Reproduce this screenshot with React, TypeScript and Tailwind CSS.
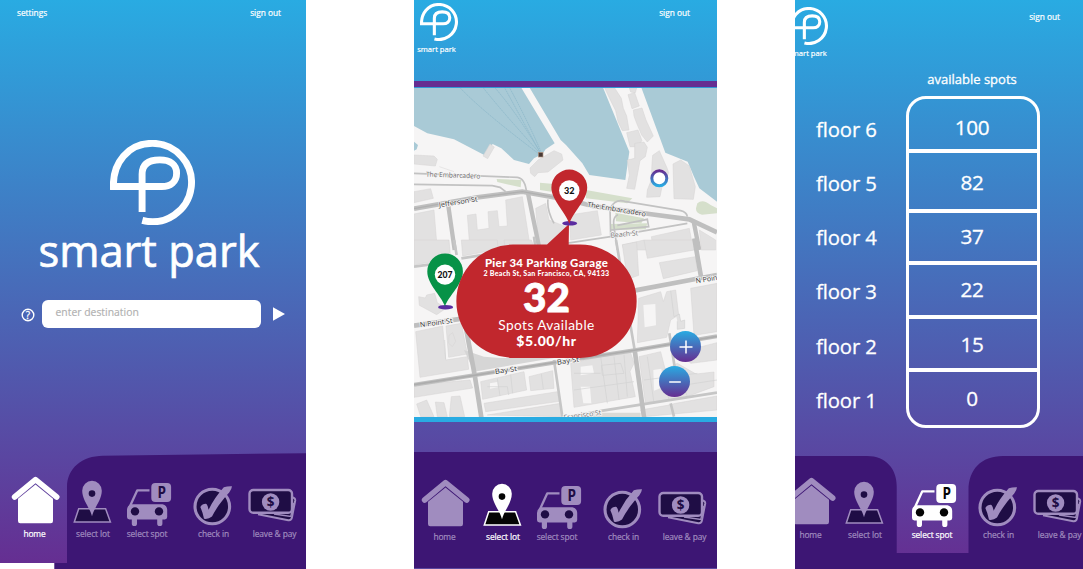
import React from "react";

type NavKey = "home" | "lot" | "spot" | "check" | "pay";

const MUTED = "#a08cbf";
const INK = "#1f0d45";

function LogoMark({ className }: { className: string }) {
  return (
    <svg className={className} viewBox="110.2 139.8 85 85" fill="none" stroke="#fff" strokeWidth="6.9">
      <path d="M142.3 211.7V174C142.3 164 149 159.7 160 159.7C170.5 159.7 176.8 164.500 176.800 173C176.800 181.500 170.500 186.300 162 186.300H113.600C112.900 163 128 143.100 152.700 143.100A39.200 39.200 0 1 1 142.500 220.200" />
    </svg>
  );
}

function HomeIcon({ color }: { color: string }) {
  return (
    <svg className="block h-[54px] w-[70px]" viewBox="0 474 70 54">
      <path d="M14.600 497L35.500 479.700L56.700 497" fill="none" stroke={color} strokeWidth="5.600" strokeLinecap="round" strokeLinejoin="round" />
      <path d="M35.500 484.500L53 498.800V521q0 2.200-2.200 2.200H20.200q-2.200 0-2.200-2.200V498.800Z" fill={color} />
    </svg>
  );
}

function LotIcon({ color, ink }: { color: string; ink: string }) {
  return (
    <svg className="block h-[54px] w-[44px]" viewBox="70 474 44 54">
      <path d="M78.700 508.800H105.600L110.400 522.100H74.300Z" fill={ink} stroke={color} strokeWidth="1.500" />
      <path d="M92 516.200C90 508 82.200 500 82.200 490.800A9.800 10 0 0 1 101.800 490.800C101.800 500 94 508 92 516.200Z" fill={color} />
      <circle cx="92" cy="493.600" r="3.300" fill={ink} />
    </svg>
  );
}

function SpotIcon({ color, ink }: { color: string; ink: string }) {
  return (
    <svg className="block h-[54px] w-[68px]" viewBox="114 474 68 54">
      <path d="M149.500 490.300H137.300L129.600 507" fill="none" stroke={color} strokeWidth="2.300" strokeLinejoin="round" />
      <path d="M131.500 504.300H162.500Q167.200 505.500 167.200 510V517q0 2.400-2.400 2.400H162.400V523.400a2.600 2.600 0 0 1-5.200 0V519.400H137V523.400a2.600 2.600 0 0 1-5.200 0V519.400H129.400q-2.400 0-2.400-2.400V510Q127 505.500 131.500 504.300Z" fill={color} />
      <circle cx="135" cy="511.400" r="4.200" fill={ink} />
      <circle cx="159" cy="511.400" r="4.200" fill={ink} />
      <rect x="151.300" y="483" width="19.800" height="19" rx="4" fill={color} />
      <text x="157.400" y="498.400" fontFamily="Open Sans, sans-serif" fontWeight="700" fontSize="15.800" textLength="8.500" lengthAdjust="spacingAndGlyphs" fill={ink}>P</text>
    </svg>
  );
}

function CheckIcon({ color, ink }: { color: string; ink: string }) {
  return (
    <svg className="block h-[54px] w-[62px]" viewBox="182 474 62 54">
      <circle cx="212.300" cy="506.500" r="17.300" fill={ink} stroke={color} strokeWidth="3.100" />
      <path d="M200.300 507Q202.500 503.500 206.500 503.900Q208 505.500 208.600 509.800Q214.500 497.500 223.800 487.300Q227.500 486 232 486.200Q231.600 489.500 229.200 492.500C222 500.500 216 508.500 212 516.500Q208.500 519.500 204 518.800Q202.500 511.500 200.300 507Z" fill={color} />
    </svg>
  );
}

function PayIcon({ color, ink }: { color: string; ink: string }) {
  return (
    <svg className="block h-[54px] w-[58px]" viewBox="244 474 58 54">
      <path d="M292 497.300L293.500 497.700Q295.500 498.400 295.200 500.500L291.900 517.600Q291.300 520.600 288.300 520.200L258 514.300" fill={ink} stroke={color} strokeWidth="2" />
      <path d="M293.600 503L290.800 516.500L274 514" fill="none" stroke={color} strokeWidth="1.400" />
      <rect x="249.500" y="490" width="42.500" height="22.700" rx="3.800" fill={ink} stroke={color} strokeWidth="2.400" />
      <circle cx="270.600" cy="502" r="8.700" fill={color} />
      <text x="270.600" y="507" textAnchor="middle" fontFamily="Open Sans, sans-serif" fontWeight="700" fontSize="13.500" fill={ink}>$</text>
    </svg>
  );
}

const ICONS = { home: HomeIcon, lot: LotIcon, spot: SpotIcon, check: CheckIcon, pay: PayIcon };

const NAV: { key: NavKey; label: string; width: string; shift: string }[] = [
  { key: "home", label: "home", width: "w-[70px]", shift: "pr-[1px]" },
  { key: "lot", label: "select lot", width: "w-[44px]", shift: "pl-[2px]" },
  { key: "spot", label: "select spot", width: "w-[68px]", shift: "pr-[2px]" },
  { key: "check", label: "check in", width: "w-[62px]", shift: "pl-[1px]" },
  { key: "pay", label: "leave & pay", width: "w-[58px]", shift: "pl-[3px]" },
];

function NavItems({ active, className, offsets = {} }: { active: NavKey; className: string; offsets?: Partial<Record<NavKey, string>> }) {
  return (
    <div className={`relative flex ${className}`}>
      {NAV.map(({ key, label, width, shift }) => {
        const Icon = ICONS[key];
        const on = key === active;
        return (
          <div key={key} className={`flex shrink-0 flex-col ${width} ${offsets[key] ?? ""}`}>
            <Icon color={on ? "#fff" : MUTED} ink={on ? "#050505" : INK} />
            <span className={`flex justify-center text-[8.400px] leading-[12px] tracking-[-0.1px] whitespace-nowrap [-webkit-text-stroke:0.200px] ${shift} ${on ? "text-white" : "text-[#a08cbf]"}`}>{label}</span>
          </div>
        );
      })}
    </div>
  );
}

function HomeScreen() {
  return (
    <section className="flex h-[569px] w-[306px] shrink-0 flex-col overflow-hidden bg-linear-to-b/srgb from-[#29abe2] to-[#662d91]">
      <header className="flex h-[26px] items-center justify-between pr-[25px] pl-[17px] text-[8.3px] [-webkit-text-stroke:0.200px]">
        <span>settings</span>
        <span>sign out</span>
      </header>
      <div className="flex flex-col items-center pt-[114px]">
        <LogoMark className="mr-[1.400px] block h-[85px] w-[85px]" />
        <h1 className="mt-[4px] mr-[8px] text-[43.500px] leading-[44px] whitespace-nowrap [-webkit-text-stroke:0.700px]">smart park</h1>
      </div>
      <div className="mt-[26.500px] flex h-7 items-center pl-[21px]">
        <svg className="mt-[3px] h-[14px] w-[14px]" viewBox="0 0 14 14">
          <circle cx="7" cy="7" r="5.800" fill="none" stroke="#fff" strokeWidth="1.400" />
          <text x="7" y="10.500" textAnchor="middle" fontFamily="Open Sans, sans-serif" fontSize="10" stroke="#fff" strokeWidth="0.300" fill="#fff">?</text>
        </svg>
        <div className="ml-[7px] flex h-7 w-[219px] items-center rounded-[6px] bg-white pb-px pl-[13.500px] text-[10.400px] text-[#b0b0b0] [-webkit-text-stroke:0.150px]">enter destination</div>
        <svg className="ml-3 h-[14px] w-[12px]" viewBox="0 0 12 14"><path d="M0 0.200L12 7L0 13.800Z" fill="#fff" /></svg>
      </div>
      <nav className="relative mt-auto h-[118px] pt-[23px]">
        <svg className="absolute inset-0 h-[118px] w-[306px]" viewBox="0 451 306 118">
          <path d="M0 563H54.500V569H0Z" fill="#fff" />
          <path d="M306 453.200L103 455.700C82 456 67 468 67 487V563H54.500V569H306Z" fill="#3d1674" />
        </svg>
        <NavItems active="home" className="" />
      </nav>
    </section>
  );
}

function Streets() {
  return (
    <svg className="block h-[329px] w-[303px]" viewBox="0 0 909 987" fontFamily="Open Sans, sans-serif">
      <rect width="909" height="987" fill="#f6f5f5" />
      {/* northern waterfront */}
      <g transform="translate(0 -24)">
        <path d="M0 20H320L422 190L395 208L385 222L360 235L345 252L300 240L262 205L236 192L212 226L120 178L40 160L0 138ZM345 20H566L646 215L634 300L526 285L505 250L456 195L440 180ZM681 20H909V365L856 325L840 290L821 245L754 218ZM0 185L12 195L8 208L0 212Z" fill="#a9cad6" />
        <g fill="none" stroke="#8bb7c9" strokeWidth="2.500" strokeDasharray="5 2">
          <path d="M135 20Q200 90 375 222M205 20Q260 90 378 220M240 20Q310 100 380 220M270 20Q330 130 380 220M285 20Q345 130 382 218" />
        </g>
        <g fill="#e2e1e1" stroke="#d6d5d5" strokeWidth="1.500">
          <path d="M228 192L241 201L221 236L207 228Z" />
          <path d="M348 264L372 240L420 212L443 222L447 240L402 276L372 278L362 290L350 280Z" />
          <path d="M0 225L60 228L70 238L64 258L0 252ZM0 335L50 326L58 355L0 368ZM0 402L60 390L70 510H0ZM76 260L120 275" />
          <path d="M160 406L186 402L190 450L225 445L222 395L250 392L255 440L280 438L275 360L325 350L346 485L200 510H168Z" />
          <path d="M365 385L395 370L405 420L456 440V485L375 500Z" />
        </g>
        <g fill="#e2e1e1" stroke="#d4d3d3" strokeWidth="1.500">
          <path d="M572 24H602L622 55L628 85L638 108L645 150L625 152L612 125L605 92L590 62Z" />
          <path d="M646 24H668L664 38L650 36ZM642 44L662 38L676 78L654 86Z" />
          <path d="M658 90L684 84L696 120L718 168L700 186L683 165L668 130L660 108Z" />
          <path d="M638 158L672 150L684 182L668 200L648 200Z" />
          <path d="M662 190L690 186L700 202L694 230L678 242L662 328L638 325L646 286L640 240L662 235Z" />
          <path d="M716 226L736 212L760 266L764 278L744 320L738 350L698 352L700 330L712 300L714 250Z" />
          <path d="M777 252L800 240L826 258L844 320L838 358L780 356Z" />
        </g>
        <g fill="#d5dfcb">
          <path d="M248 297L322 300L320 322L250 306ZM378 308L420 312L412 335L378 330ZM516 330L655 355L640 370L516 355ZM604 398L690 415L682 430L606 424ZM590 432L700 430L695 448L590 450ZM850 370Q866 355 890 375L909 385V400L864 404Q845 400 846 385Z" />
        </g>
        <g fill="none" stroke="#c2c2c2" strokeWidth="5">
          <path d="M0 280L310 292Q334 295 338 340M0 313L235 317L258 322L275 335M590 470L588 385Q605 355 632 364L800 392Q818 396 820 410M612 404Q595 410 600 440L610 510M590 450L704 440L700 418L610 436M456 490L590 470L820 430M402 358Q398 390 420 430" />
        </g>
        <g fill="none" stroke="#bfbfbf" strokeWidth="14">
          <path d="M0 386L190 352L325 335L456 358L536 378L706 402L826 418L909 457" />
          <path d="M103 378L122 510M342 340L375 500M839 425L856 510" strokeWidth="13" />
        </g>
        <path d="M0 386L190 352L325 335L456 358" fill="none" stroke="#b0b0b0" strokeWidth="4" />
        <g fill="#e2e1e1" stroke="#d6d5d5" strokeWidth="1.500">
          <path d="M466 405L550 392L562 465L470 480ZM625 495L690 480L705 510H630ZM712 470L826 445L838 510H718ZM856 450L905 480V510H862Z" />
        </g>
        <g fontSize="21" fill="#777" stroke="#f6f5f5" strokeWidth="4" paintOrder="stroke">
          <text x="36" y="290" transform="rotate(2 36 290)" textLength="163" lengthAdjust="spacingAndGlyphs" fill="#666">The Embarcadero</text>
          <text x="76" y="382" transform="rotate(-9 76 382)" textLength="117" lengthAdjust="spacingAndGlyphs" fill="#333">Jefferson St</text>
          <text x="519" y="380" transform="rotate(9.500 519 380)" textLength="178" lengthAdjust="spacingAndGlyphs" fill="#333">The Embarcadero</text>
          <text x="590" y="473" transform="rotate(-5 590 473)" textLength="83" lengthAdjust="spacingAndGlyphs">Beach St</text>
        </g>
        <rect x="373" y="217" width="14" height="14" fill="#493a35" stroke="#b59886" strokeWidth="2" />
      </g>
      {/* southern blocks */}
      <g transform="translate(0 456)">
        <g fill="#e2e1e1" stroke="#d4d3d3" strokeWidth="1.500">
          <path d="M0 0H105L110 55L0 75ZM142 0H250L252 28L146 48ZM270 0H352L360 20L275 32Z" />
          <path d="M14 170L34 174L38 165L62 160L70 188L96 205L68 224L16 196Z" />
          <path d="M5 275L86 258L95 360L160 350L164 388L18 412ZM96 258L142 250L160 342L104 352ZM105 286L116 278L125 304L115 320L104 310Z" />
          <path d="M0 435L168 420L176 444L0 472ZM8 492L38 480L60 530H20ZM64 486L90 488L100 530H70ZM112 470L138 468L152 530H106Z" />
          <path d="M200 425L330 395L338 450L206 478ZM345 410L416 392L420 445L350 452ZM210 490L430 455L436 484L215 515ZM220 525L440 490L442 530Z" />
          <path d="M625 14L668 6L674 106L640 118ZM690 0H838L840 30L700 55ZM736 68L844 50L850 92L748 116Z" />
          <path d="M674 175L740 155L748 185L758 155L785 150L794 225L770 240L758 292L670 308ZM830 145L909 130V275L840 286Z" />
          <path d="M470 370L560 350L650 338L660 370L648 394L664 470L480 502ZM675 350L740 335L754 390L790 370L846 402L900 396V440L808 474L694 488Z" />
          <path d="M800 336L909 308V360L830 370ZM680 510L760 496L785 490L909 468V510L690 530Z" />
        </g>
        <path d="M150 330L210 350L260 354H420L180 395Z" fill="#d6d6d6" />
        <g fill="#f6f5f5">
          <path d="M688 195L724 192L726 256L692 262ZM500 380L535 376L540 400L500 406ZM500 440H528L532 490H508ZM718 390L742 386L750 440L720 452ZM228 430L250 426L252 442L228 446Z" />
        </g>
        <g fill="none" stroke="#d2d1d1" strokeWidth="2">
          <path d="M250 416L258 468M290 404L296 460M382 402L388 447M95 358L92 300M480 400H560M560 350L580 490M600 350L615 480M630 344L640 470M480 450L660 425M700 350L720 490M750 410L765 480M690 420L850 400M780 440L909 420M800 410L820 470" />
          <path d="M770 152L780 230L796 222L800 244L812 240V265L790 268V244" fill="#e2e1e1" />
          <path d="M562 376L620 370L630 400L565 406ZM220 440H280L284 465" />
        </g>
        <g fill="none" stroke="#c6c6c6" strokeWidth="8">
          <path d="M0 80L45 74M142 55L250 38M120 0L128 45M360 -10L364 20M420 360L445 530" />
          <path d="M456 532L566 512L909 458M606 0L662 330M766 280L785 400M770 490L780 530" />
        </g>
        <g fill="none" stroke="#bfbfbf" strokeWidth="14">
          <path d="M0 257L150 235M660 152L909 105M150 232L182 405L202 532M662 330L690 532M841 -5L861 110" />
          <path d="M0 434L180 406L456 362L666 330L909 289" strokeWidth="12" />
        </g>
        <path d="M0 434L180 406L456 362L666 330L909 289" fill="none" stroke="#adadad" strokeWidth="5" />
        <path d="M456 530L566 518H680V532H456Z" fill="#dadad6" />
        <g fontSize="21" fill="#333" stroke="#f6f5f5" strokeWidth="5" paintOrder="stroke">
          <text x="19" y="262" transform="rotate(-8 19 262)" textLength="98" lengthAdjust="spacingAndGlyphs">N Point St</text>
          <text x="846" y="130" transform="rotate(-9 846 130)" textLength="98" lengthAdjust="spacingAndGlyphs">N Point St</text>
          <text x="244" y="402" transform="rotate(-8 244 402)" textLength="66" lengthAdjust="spacingAndGlyphs">Bay St</text>
          <text x="430" y="374" transform="rotate(-8 430 374)" textLength="66" lengthAdjust="spacingAndGlyphs">Bay St</text>
          <text x="450" y="540" transform="rotate(-8 450 540)" textLength="113" lengthAdjust="spacingAndGlyphs" fill="#777">Francisco St</text>
        </g>
      </g>
    </svg>
  );
}

function Pins() {
  return (
    <svg className="absolute inset-0 h-[329px] w-[303px]" viewBox="414 88 303 329" fontFamily="Lato, sans-serif">
      <defs>
        <linearGradient id="ring" x1="0" y1="0" x2="0" y2="1">
          <stop offset="0" stopColor="#662d91" />
          <stop offset="1" stopColor="#29abe2" />
        </linearGradient>
      </defs>
      <circle cx="659.300" cy="178.300" r="7.500" fill="#fff" stroke="url(#ring)" strokeWidth="3" />
      <ellipse cx="445.600" cy="307.200" rx="7.500" ry="2.300" fill="#5a2ca0" />
      <path d="M445 306.500C441 295 427.300 284.500 427.300 271.500A17.800 18 0 0 1 462.900 271.500C462.900 284.500 449 295 445 306.500Z" fill="#079247" />
      <circle cx="445" cy="274.600" r="10.200" fill="#fff" />
      <text x="445" y="277.600" textAnchor="middle" fontWeight="900" fontSize="8.400" textLength="15" lengthAdjust="spacingAndGlyphs" fill="#111">207</text>
      <path d="M513 244.600H547L569 224L568.700 244.600H580A56.600 56.600 0 0 1 580 357.900H513A56.600 56.600 0 0 1 513 244.600Z" fill="#c1272d" />
      <ellipse cx="569.700" cy="223.300" rx="7.500" ry="2.300" fill="#5a2ca0" />
      <path d="M569.300 224C565.300 211 551.400 200.500 551.400 187.500A17.900 18 0 0 1 587.200 187.500C587.200 200.500 573.300 211 569.300 224Z" fill="#c1272d" />
      <circle cx="569.300" cy="190.500" r="10.200" fill="#fff" />
      <text x="569.300" y="193.600" textAnchor="middle" fontWeight="900" fontSize="8.600" textLength="10.500" lengthAdjust="spacingAndGlyphs" fill="#111">32</text>
    </svg>
  );
}

function ZoomButton({ minus = false, className }: { minus?: boolean; className: string }) {
  return (
    <button className={`absolute flex h-[31px] w-[31px] items-center justify-center rounded-full bg-linear-to-b/srgb from-[#29abe2] to-[#662d91] ${className}`}>
      <svg className="h-[14px] w-[14px]" viewBox="0 0 14 14" stroke="#fff" strokeWidth="1.500">
        <path d={minus ? "M1.200 7H12.800" : "M0.500 7H13.500M7 0.500V13.500"} />
      </svg>
    </button>
  );
}

function MapScreen() {
  return (
    <section className="ml-[108px] flex h-[569px] w-[303px] shrink-0 flex-col overflow-hidden border-b border-[#5b47a0] bg-linear-to-b/srgb from-[#29abe2] to-[#662d91]">
      <header className="flex h-[81px] shrink-0 justify-between pr-[27px] [-webkit-text-stroke:0.200px]">
        <div className="flex w-[45px] flex-col items-center pt-[3px]">
          <LogoMark className="ml-[5px] h-[38px] w-[38px]" />
          <span className="mt-[2px] text-[7.600px] leading-[12px] whitespace-nowrap">smart park</span>
        </div>
        <span className="h-[26px] text-[8.300px] leading-[26px]">sign out</span>
      </header>
      <div className="h-[6px] shrink-0 bg-[#662d91]" />
      <div className="relative mt-px h-[329px] shrink-0">
        <Streets />
        <Pins />
        <div className="absolute top-[157px] left-[42px] flex h-[113px] w-[181px] flex-col items-center pt-[11px] font-['Lato',sans-serif] whitespace-nowrap">
          <p className="text-[11.400px] leading-[14px] font-black tracking-[0.300px]">Pier 34 Parking Garage</p>
          <p className="text-[7.100px] leading-[8px] font-black tracking-[0.250px]">2 Beach St, San Francisco, CA, 94133</p>
          <p className="text-[40.500px] leading-[38px] font-black [-webkit-text-stroke:0.800px]">32</p>
          <p className="text-[13.700px] leading-[17px] tracking-[0.400px]">Spots Available</p>
          <p className="text-[14px] leading-[15px] font-black tracking-[0.600px]">$5.00/hr</p>
        </div>
        <ZoomButton className="top-[243px] left-[256px]" />
        <ZoomButton minus className="top-[278px] left-[245px]" />
      </div>
      <div className="h-[5px] shrink-0 bg-[#29abe2]" />
      <nav className="mt-auto h-[116px] shrink-0 bg-[#3d1674] pt-[25px]">
        <NavItems active="lot" className="-ml-[4px]" />
      </nav>
    </section>
  );
}

const FLOORS = [
  { label: "floor 6", spots: 100, cell: "h-[54px] pb-[1px] pt-[8px]" },
  { label: "floor 5", spots: 82, cell: "h-[60px] pt-[2px]" },
  { label: "floor 4", spots: 37, cell: "h-[52px] pb-[2px]" },
  { label: "floor 3", spots: 22, cell: "h-[54px] pb-[2px]" },
  { label: "floor 2", spots: 15, cell: "h-[53px] pt-[1px]" },
  { label: "floor 1", spots: 0, cell: "h-[52px]" },
];

function SpotsScreen() {
  return (
    <section className="ml-[78px] flex h-[569px] w-[288px] shrink-0 flex-col overflow-hidden bg-linear-to-b/srgb from-[#29abe2] to-[#662d91]">
      <header className="flex h-[66px] shrink-0 justify-between pr-[23px] [-webkit-text-stroke:0.200px]">
        <div className="-ml-[10px] flex w-[45px] flex-col items-center pt-[7px]">
          <LogoMark className="ml-[3px] h-[38px] w-[38px]" />
          <span className="mt-[2px] text-[7.600px] leading-[12px] whitespace-nowrap">smart park</span>
        </div>
        <span className="h-[34px] text-[8.300px] leading-[34px]">sign out</span>
      </header>
      <div className="flex [-webkit-text-stroke:0.300px]">
        <div className="w-[111px] pt-[35.500px] pl-[21px] text-[20.300px] tracking-[-0.100px]">
          {FLOORS.map((f) => (
            <div key={f.label} className="h-[54.300px] leading-[54.300px] whitespace-nowrap">{f.label}</div>
          ))}
        </div>
        <div className="flex flex-col">
          <h2 className="h-[30px] pr-[2px] text-center text-[13px] leading-[27px] whitespace-nowrap">available spots</h2>
          <div className="h-[332px] w-[134px] divide-y-4 divide-white overflow-hidden rounded-[20px] border-[3.500px] border-white">
            {FLOORS.map((f) => (
              <div key={f.label} className={`flex items-center justify-center pr-[2px] text-[20.700px] leading-none tracking-[-0.400px] ${f.cell}`}>{f.spots}</div>
            ))}
          </div>
        </div>
      </div>
      <nav className="relative mt-auto h-[113px] shrink-0 pt-[19px]">
        <svg className="absolute inset-0 h-[113px] w-[288px]" viewBox="0 0 288 113">
          <path d="M0 0H72C91 0 101.700 13 101.700 30V97H173.500V34C173.500 14 186 0 208 0H288V113H0Z" fill="#3d1674" />
        </svg>
        <NavItems active="spot" className="-ml-[19px]" offsets={{ lot: "-ml-[4px]", spot: "ml-[13px]" }} />
      </nav>
    </section>
  );
}

export default function App() {
  return (
    <main className="flex h-[569px] w-[1083px] overflow-hidden bg-white font-['Open_Sans',sans-serif] text-white">
      <HomeScreen />
      <MapScreen />
      <SpotsScreen />
    </main>
  );
}
